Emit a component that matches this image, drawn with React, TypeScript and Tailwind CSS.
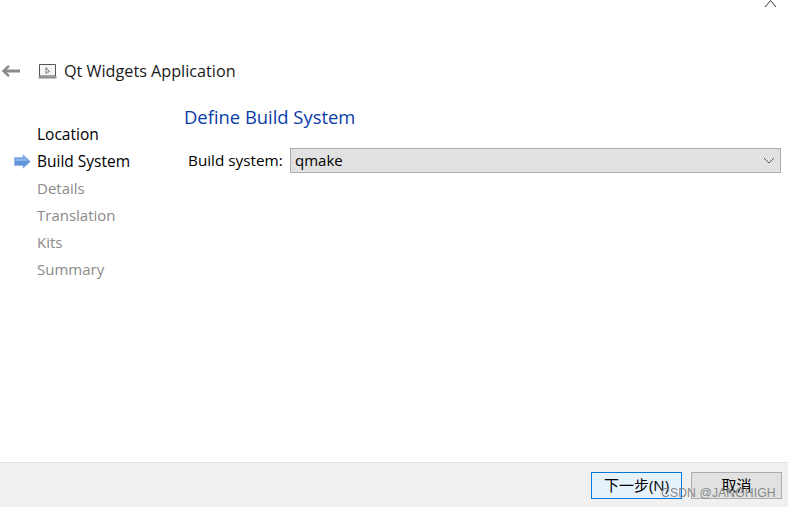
import React from 'react'

////////////////////////////////////////////////////////////////////////////////
// Constants

const STEPS = [
  { label: 'Location', done: true },
  { label: 'Build System', done: true, current: true },
  { label: 'Details' },
  { label: 'Translation' },
  { label: 'Kits' },
  { label: 'Summary' }
]

const CJK = "font-['Open_Sans','Noto_Sans_CJK_SC',sans-serif]"

////////////////////////////////////////////////////////////////////////////////
// Icons

const BackArrow = () => (
  <svg width="18" height="12" viewBox="0 0 18 12" fill="none">
    <path d="M7 0.8 L1.6 6 L7 11.2" stroke="#8a8a8a" strokeWidth="2.4" />
    <path d="M2 6 H18" stroke="#8a8a8a" strokeWidth="3" />
  </svg>
)

const WizardIcon = () => (
  <svg width="19" height="16" viewBox="0 0 19 16" fill="none">
    <path d="M1.5 1.5 H17.5 V13 H1.5 Z" fill="#f6f6f6" stroke="#555" />
    <path d="M0.5 14.5 H18.5" stroke="#8c8c8c" strokeWidth="2" />
    <path d="M8 4.5 V10.5 L9.5 9.1 L11.5 8.9 Z" fill="#fff" stroke="#555" strokeWidth="0.8" />
  </svg>
)

const StepArrow = () => (
  <svg width="17" height="15" viewBox="0 0 17 15">
    <path
      d="M0.5 3.5 H9 V0.8 L16.3 7.5 L9 14.2 V11.5 H0.5 Z"
      fill="#5f93dc"
      stroke="#9dbbe6"
      strokeWidth="1"
    />
    <path d="M1.5 4.5 H10 V3 L14 7 H1.5 Z" fill="#8db6ee" />
  </svg>
)

const Chevron = () => (
  <svg width="12" height="7" viewBox="0 0 12 7" fill="none">
    <path d="M1 1 L6 6 L11 1" stroke="#555" strokeWidth="1" />
  </svg>
)

////////////////////////////////////////////////////////////////////////////////
// Components

const Sidebar = () => (
  <ul className="w-[184px] shrink-0 pt-[39px] pl-[14px]">
    {STEPS.map((step) => (
      <li key={step.label} className="flex h-[27px] items-center">
        <span className="flex w-[23px] shrink-0 items-center">
          {step.current && <StepArrow />}
        </span>
        <span className={step.done ? 'text-[15.5px] text-black' : 'text-[15px] text-[#8a8a8a]'}>
          {step.label}
        </span>
      </li>
    ))}
  </ul>
)

const WizardButton = ({ label, primary }: { label: string; primary?: boolean }) => (
  <button
    className={`h-[27px] w-[91px] border text-[15px] text-black ${CJK} ${
      primary ? 'border-[#0078d7] bg-[#e5f1fb]' : 'border-[#adadad] bg-[#e1e1e1]'
    }`}
  >
    {label}
  </button>
)

////////////////////////////////////////////////////////////////////////////////
// App

export default function App() {
  return (
    <div className="relative flex h-[507px] w-[788px] flex-col overflow-hidden bg-white font-['Open_Sans',sans-serif]">
      <div className="flex h-[60px] justify-end pr-[10px]">
        <svg width="14" height="7" viewBox="0 0 14 7" fill="none">
          <path d="M1 7 L6.5 0.5 L12 7" stroke="#333" strokeWidth="1" />
        </svg>
      </div>

      <header className="flex h-[22px] items-center pl-[2px]">
        <BackArrow />
        <span className="ml-[18px] flex">
          <WizardIcon />
        </span>
        <span className="ml-[7px] text-[16.2px] text-[#1a1a1a]">Qt Widgets Application</span>
      </header>

      <main className="flex min-h-0 flex-1">
        <Sidebar />
        <section className="flex-1 pt-[22px] pr-[7px]">
          <h1 className="text-[18.4px] leading-[26px] text-[#0a3ca8]">Define Build System</h1>
          <div className="mt-[18px] flex items-center pl-[4px]">
            <label className="w-[102px] text-[15.3px] text-black">Build system:</label>
            <div className="flex h-[25px] flex-1 items-center justify-between border border-[#adadad] bg-[#e1e1e1] pr-[5px] pl-[4px]">
              <span className="text-[15px] text-black">qmake</span>
              <Chevron />
            </div>
          </div>
        </section>
      </main>

      <footer className="flex h-[45px] items-start justify-end gap-[9px] border-t border-[#dfdfdf] bg-[#f0f0f0] pt-[9px] pr-[6px]">
        <WizardButton label="下一步(N)" primary />
        <WizardButton label="取消" />
      </footer>

      <span className="absolute top-[484px] left-[661px] font-['Liberation_Sans',sans-serif] text-[12.2px] tracking-[0.1px] text-[#8a8a8a]">
        CSDN @JANGHIGH
      </span>
    </div>
  )
}
